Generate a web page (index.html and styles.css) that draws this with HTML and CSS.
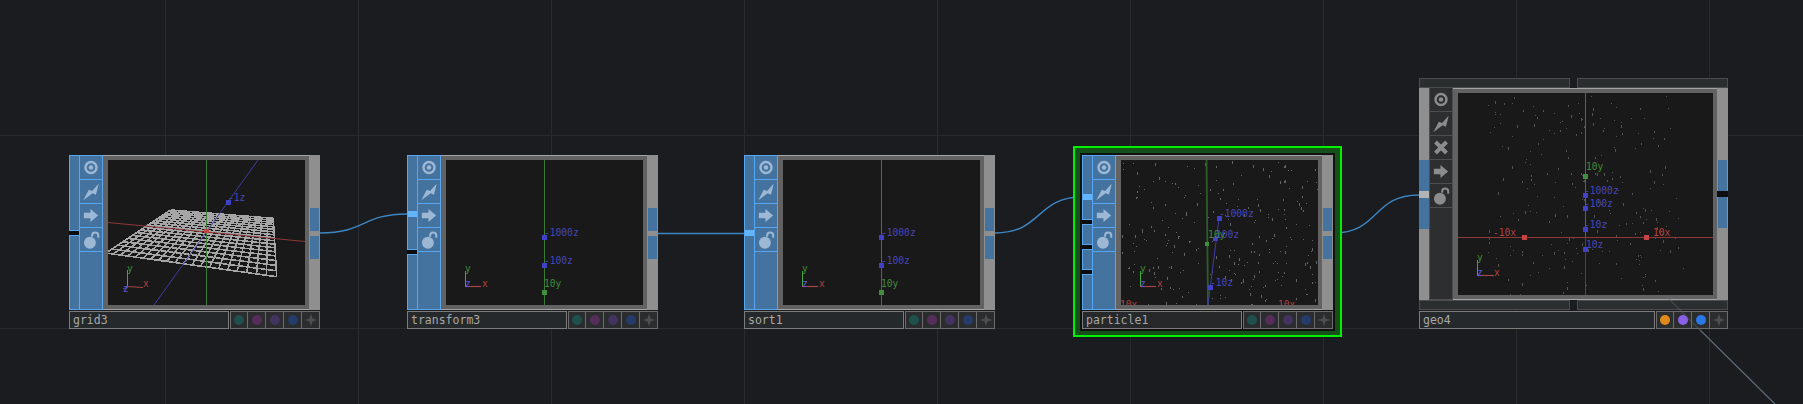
FILE: index.html
```html
<!DOCTYPE html>
<html lang="en">
<head>
<meta charset="utf-8">
<title>Network editor</title>
<link rel="stylesheet" href="styles.css">
</head>
<body>
<svg width="0" height="0" class="defs">
  <defs>
    <symbol id="i-view" viewBox="2 2 20 20"><circle cx="12" cy="12" r="5" fill="none" stroke="currentColor" stroke-width="2.2"/><circle cx="12" cy="12" r="2.1" fill="currentColor"/></symbol>
    <symbol id="i-bolt" viewBox="2 2 20 20"><path d="M19 5L16.5 15L13.5 13.5L5 20L10 10.5L13 11.5Z" fill="currentColor"/></symbol>
    <symbol id="i-x" viewBox="2 2 20 20"><path d="M7 7L17 17M17 7L7 17" fill="none" stroke="currentColor" stroke-width="3.6"/></symbol>
    <symbol id="i-arrow" viewBox="2 2 20 20"><path d="M5.5 9.5H11.5V6L18.5 12L11.5 18V14.5H5.5Z" fill="currentColor"/></symbol>
    <symbol id="i-lock" viewBox="2 2 20 20"><circle cx="11" cy="15" r="5.4" fill="currentColor"/><path d="M13 9.5V8.5C13 4.8 18.6 4.8 18.6 8.5V10.5" fill="none" stroke="currentColor" stroke-width="1.8"/></symbol>
    <symbol id="i-star" viewBox="0 0 18 18"><path d="M9 2.5L10.5 7.5L15.5 9L10.5 10.5L9 15.5L7.5 10.5L2.5 9L7.5 7.5Z" fill="currentColor"/></symbol>
  </defs>
</svg>

<main class="canvas">
  <svg class="wires" width="1803" height="404">
    <path d="M320 233C366 233 362 214 407 214"/>
    <path d="M658 233.5H744"/>
    <path d="M995 233C1042 233 1036 197 1082 197"/>
    <path d="M1333 233C1380 233 1372 195 1419 195"/>
  </svg>

  <div class="selection"></div>

  <section class="node node-grid">
    <div class="body">
      <div class="inputs">
        <div class="input in-76"></div>
        <div class="input in-fill"></div>
      </div>
      <div class="icons">
        <div class="icon"><svg><use href="#i-view"/></svg></div>
        <div class="icon"><svg><use href="#i-bolt"/></svg></div>
        <div class="icon"><svg><use href="#i-arrow"/></svg></div>
        <div class="icon"><svg><use href="#i-lock"/></svg></div>
      </div>
      <div class="viewer">
        <svg class="view" width="197" height="145">
          <g id="mesh"></g>
          <line class="g" x1="98.5" y1="0" x2="98.5" y2="145"/>
          <line class="r" x1="0" y1="62.5" x2="197" y2="81.5"/>
          <line class="b" x1="150" y1="0" x2="46" y2="145"/>
          <rect class="sq-r" x="96" y="69" width="5" height="4"/>
          <rect class="sq-b" x="118" y="40" width="5" height="5"/>
          <text class="t-b" x="120" y="41">-1z</text>
          <line class="ag" x1="19.5" y1="110" x2="19.5" y2="127"/>
          <line class="ar" x1="19" y1="126.5" x2="35" y2="127.5"/>
          <line class="ab" x1="19.5" y1="127" x2="15" y2="129"/>
          <text class="t-g" x="19" y="112">y</text>
          <text class="t-r" x="35" y="127">x</text>
          <text class="t-a" x="15" y="132">z</text>
        </svg>
      </div>
      <div class="outputs">
        <div class="output"></div>
        <div class="output"></div>
      </div>
    </div>
    <div class="label-row">
      <div class="name">grid3</div>
      <div class="btn"><span class="dot teal"></span></div>
      <div class="btn"><span class="dot magenta"></span></div>
      <div class="btn"><span class="dot purple"></span></div>
      <div class="btn"><span class="dot navy"></span></div>
      <div class="btn"><svg class="star"><use href="#i-star"/></svg></div>
    </div>
  </section>

  <section class="node node-transform">
    <div class="body">
      <div class="inputs">
        <div class="input in-95"><span class="hot hot-56"></span></div>
        <div class="input in-fill"></div>
      </div>
      <div class="icons">
        <div class="icon"><svg><use href="#i-view"/></svg></div>
        <div class="icon"><svg><use href="#i-bolt"/></svg></div>
        <div class="icon"><svg><use href="#i-arrow"/></svg></div>
        <div class="icon"><svg><use href="#i-lock"/></svg></div>
      </div>
      <div class="viewer">
        <svg class="view" width="197" height="145">
          <line class="g" x1="98.5" y1="0" x2="98.5" y2="145"/>
          <rect class="sq-b" x="96" y="75" width="5" height="5"/>
          <rect class="sq-b" x="96" y="103" width="5" height="5"/>
          <rect class="sq-g" x="96" y="130" width="5" height="5"/>
          <text class="t-b" x="98" y="76">-1000z</text>
          <text class="t-b" x="98" y="104">-100z</text>
          <text class="t-g" x="98" y="127">10y</text>
          <line class="ag" x1="19.5" y1="111" x2="19.5" y2="127"/>
          <line class="ar" x1="19" y1="126.5" x2="35" y2="126.5"/>
          <text class="t-g" x="19" y="112">y</text>
          <text class="t-r" x="36" y="127">x</text>
          <text class="t-a" x="19" y="127">z</text>
        </svg>
      </div>
      <div class="outputs">
        <div class="output"></div>
        <div class="output"></div>
      </div>
    </div>
    <div class="label-row">
      <div class="name">transform3</div>
      <div class="btn"><span class="dot teal"></span></div>
      <div class="btn"><span class="dot magenta"></span></div>
      <div class="btn"><span class="dot purple"></span></div>
      <div class="btn"><span class="dot navy"></span></div>
      <div class="btn"><svg class="star"><use href="#i-star"/></svg></div>
    </div>
  </section>

  <section class="node node-sort">
    <div class="body">
      <div class="inputs">
        <div class="input in-fill"><span class="hot hot-75"></span></div>
      </div>
      <div class="icons">
        <div class="icon"><svg><use href="#i-view"/></svg></div>
        <div class="icon"><svg><use href="#i-bolt"/></svg></div>
        <div class="icon"><svg><use href="#i-arrow"/></svg></div>
        <div class="icon"><svg><use href="#i-lock"/></svg></div>
      </div>
      <div class="viewer">
        <svg class="view" width="197" height="145">
          <line class="g" x1="98.5" y1="0" x2="98.5" y2="145"/>
          <rect class="sq-b" x="96" y="75" width="5" height="5"/>
          <rect class="sq-b" x="96" y="103" width="5" height="5"/>
          <rect class="sq-g" x="96" y="130" width="5" height="5"/>
          <text class="t-b" x="98" y="76">-1000z</text>
          <text class="t-b" x="98" y="104">-100z</text>
          <text class="t-g" x="98" y="127">10y</text>
          <line class="ag" x1="19.5" y1="111" x2="19.5" y2="127"/>
          <line class="ar" x1="19" y1="126.5" x2="35" y2="126.5"/>
          <text class="t-g" x="19" y="112">y</text>
          <text class="t-r" x="36" y="127">x</text>
          <text class="t-a" x="19" y="127">z</text>
        </svg>
      </div>
      <div class="outputs">
        <div class="output"></div>
        <div class="output"></div>
      </div>
    </div>
    <div class="label-row">
      <div class="name">sort1</div>
      <div class="btn"><span class="dot teal"></span></div>
      <div class="btn"><span class="dot magenta"></span></div>
      <div class="btn"><span class="dot purple"></span></div>
      <div class="btn"><span class="dot navy"></span></div>
      <div class="btn"><svg class="star"><use href="#i-star"/></svg></div>
    </div>
  </section>

  <section class="node node-particle">
    <div class="body">
      <div class="inputs">
        <div class="input in-65"><span class="hot hot-39"></span></div>
        <div class="input in-21"></div>
        <div class="input in-21"></div>
        <div class="input in-fill"></div>
      </div>
      <div class="icons">
        <div class="icon"><svg><use href="#i-view"/></svg></div>
        <div class="icon"><svg><use href="#i-bolt"/></svg></div>
        <div class="icon"><svg><use href="#i-arrow"/></svg></div>
        <div class="icon"><svg><use href="#i-lock"/></svg></div>
      </div>
      <div class="viewer">
        <svg class="view" width="197" height="145">
          <g id="dots-particle"></g>
          <line class="g thick" x1="85.5" y1="0" x2="87" y2="145"/>
          <line class="b" x1="98" y1="58" x2="87" y2="145"/>
          <rect class="sq-b" x="96" y="56" width="5" height="5"/>
          <rect class="sq-b" x="92" y="77" width="5" height="4"/>
          <rect class="sq-g" x="84" y="82" width="4" height="4"/>
          <rect class="sq-b" x="87" y="125" width="5" height="5"/>
          <text class="t-b" x="98" y="57">-1000z</text>
          <text class="t-b" x="95" y="78">100z</text>
          <text class="t-g" x="87" y="78">10y</text>
          <text class="t-b" x="89" y="126">-10z</text>
          <text class="t-r" x="-1" y="148">10x</text>
          <text class="t-r" x="157" y="148">10x</text>
          <line class="ag" x1="19.5" y1="111" x2="19.5" y2="127"/>
          <line class="ar" x1="19" y1="126.5" x2="35" y2="126.5"/>
          <text class="t-g" x="19" y="112">y</text>
          <text class="t-r" x="36" y="127">x</text>
          <text class="t-a" x="19" y="127">z</text>
        </svg>
      </div>
      <div class="outputs">
        <div class="output"></div>
        <div class="output"></div>
      </div>
    </div>
    <div class="label-row">
      <div class="name">particle1</div>
      <div class="btn"><span class="dot teal"></span></div>
      <div class="btn"><span class="dot magenta"></span></div>
      <div class="btn"><span class="dot purple"></span></div>
      <div class="btn"><span class="dot navy"></span></div>
      <div class="btn"><svg class="star"><use href="#i-star"/></svg></div>
    </div>
  </section>

  <section class="node node-geo">
    <div class="tabs">
      <div class="tab"></div>
      <div class="tab"></div>
    </div>
    <div class="body body-geo">
      <div class="rail rail-left">
        <div class="rail-port"></div>
        <div class="rail-gap"></div>
        <div class="rail-port"></div>
      </div>
      <div class="icons icons-off">
        <div class="icon"><svg><use href="#i-view"/></svg></div>
        <div class="icon"><svg><use href="#i-bolt"/></svg></div>
        <div class="icon"><svg><use href="#i-x"/></svg></div>
        <div class="icon"><svg><use href="#i-arrow"/></svg></div>
        <div class="icon"><svg><use href="#i-lock"/></svg></div>
      </div>
      <div class="viewer">
        <svg class="view" width="255" height="202">
          <g id="dots-geo"></g>
          <line class="g" x1="127.5" y1="0" x2="127.5" y2="144"/>
          <line class="b" x1="127.5" y1="144" x2="127.5" y2="202"/>
          <line class="r" x1="0" y1="144.5" x2="255" y2="144.5"/>
          <rect class="sq-g" x="125" y="81" width="5" height="5"/>
          <rect class="sq-b" x="125" y="100" width="5" height="5"/>
          <rect class="sq-b" x="125" y="113" width="5" height="5"/>
          <rect class="sq-b" x="125" y="134" width="5" height="5"/>
          <rect class="sq-b" x="125" y="154" width="5" height="5"/>
          <rect class="sq-r" x="64" y="142" width="5" height="5"/>
          <rect class="sq-r" x="186" y="142" width="5" height="5"/>
          <text class="t-g" x="128" y="77">10y</text>
          <text class="t-b" x="126" y="101">-1000z</text>
          <text class="t-b" x="126" y="114">-100z</text>
          <text class="t-b" x="126" y="135">-10z</text>
          <text class="t-b" x="128" y="155">10z</text>
          <text class="t-r" x="35" y="143">-10x</text>
          <text class="t-r" x="195" y="143">10x</text>
          <line class="ag" x1="19.5" y1="167" x2="19.5" y2="183"/>
          <line class="ar" x1="19" y1="182.5" x2="36" y2="182.5"/>
          <text class="t-g" x="19" y="168">y</text>
          <text class="t-r" x="36" y="183">x</text>
          <text class="t-a" x="19" y="183">z</text>
        </svg>
      </div>
      <div class="rail rail-right">
        <div class="rail-port"></div>
        <div class="rail-gap rail-gap-dark"></div>
        <div class="rail-port"></div>
      </div>
    </div>
    <div class="tabs">
      <div class="tab"></div>
      <div class="tab"></div>
    </div>
    <div class="label-row">
      <div class="name">geo4</div>
      <div class="btn"><span class="dot orange"></span></div>
      <div class="btn"><span class="dot violet"></span></div>
      <div class="btn"><span class="dot azure"></span></div>
      <div class="btn"><svg class="star"><use href="#i-star"/></svg></div>
    </div>
  </section>

  <svg class="wires-top" width="1803" height="404">
    <line class="faint" x1="1665" y1="295" x2="1700" y2="330"/>
    <line class="strong" x1="1700" y1="330" x2="1775" y2="404"/>
  </svg>
</main>
<script src="script.js"></script>
</body>
</html>
```

FILE: styles.css
```css
* { box-sizing: border-box; }

html, body {
  margin: 0;
  height: 100%;
  overflow: hidden;
}

body {
  background-color: #1a1c20;
  background-image:
    linear-gradient(to right, #272a2f 1px, transparent 1px),
    linear-gradient(to bottom, #272a2f 1px, transparent 1px);
  background-size: 193px 193px;
  background-position: 165px 135px;
}

.defs { position: absolute; }

.canvas {
  position: relative;
  width: 1803px;
  height: 404px;
  overflow: hidden;
}

.wires, .wires-top {
  position: absolute;
  left: 0;
  top: 0;
}

.wires-top { pointer-events: none; }

.wires path {
  fill: none;
  stroke: #3d86c4;
  stroke-width: 1.4;
}

.wires-top line { stroke: #5a6874; stroke-width: 1.3; }
.wires-top .faint { opacity: .45; }

.selection {
  position: absolute;
  left: 1073px;
  top: 146px;
  width: 269px;
  height: 191px;
  border: 2px solid #00f000;
  background: #15501a;
}

.selection::after {
  content: "";
  position: absolute;
  left: 5px;
  right: 5px;
  top: 5px;
  bottom: 4px;
  background: #101210;
}

.node {
  position: absolute;
  top: 155px;
  width: 251px;
}

.node-grid { left: 69px; }
.node-transform { left: 407px; }
.node-sort { left: 744px; }
.node-particle { left: 1082px; }
.node-geo { left: 1419px; top: 78px; width: 309px; }

.body {
  display: flex;
  height: 155px;
}

.body-geo { height: 212px; }

.inputs {
  width: 10px;
  display: flex;
  flex-direction: column;
  gap: 4px;
  background: #0c0c0c;
}

.input {
  position: relative;
  background: #44739f;
  border: 1px solid #57a6f2;
  border-right: 0;
}

.in-21 { height: 21px; }
.in-65 { height: 65px; }
.in-76 { height: 76px; }
.in-95 { height: 95px; }
.in-fill { flex: 1; }

.hot {
  position: absolute;
  left: 0;
  width: 9px;
  height: 6px;
  background: #62b4ff;
}

.hot-39 { top: 38px; }
.hot-56 { top: 55px; }
.hot-75 { top: 74px; }

.icons {
  width: 24px;
  background: #44739f;
  border: 1px solid #57a6f2;
  color: #9db8d4;
}

.icon {
  height: 24px;
  border-bottom: 1px solid #57a6f2;
}

.icon svg {
  display: block;
  width: 22px;
  height: 23px;
}

.icons-off {
  background: #2c2e2f;
  border-color: #4c4e4f;
  border-top: 0;
  color: #8c8c8c;
}

.icons-off .icon { border-bottom-color: #4c4e4f; }

.viewer {
  flex: 1;
  background: #626262;
  border-top: 1px solid #a4a4a4;
  border-bottom: 1px solid #a4a4a4;
  padding: 4px 4px 4px 5px;
}

.view {
  display: block;
  background: #191919;
  overflow: hidden;
}

.view line { stroke-width: 1; }
.view .g { stroke: #3a7a34; }
.view .g.thick { stroke: #2c5e2a; stroke-width: 1.8; }
.view .r { stroke: #8f3838; }
.view .b { stroke: #3c3ca8; }
.view .ag { stroke: #44a844; }
.view .ar { stroke: #a84444; stroke-width: 1.2; }
.view .ab { stroke: #4a4ac8; }

.sq-b { fill: #4040c8; }
.sq-g { fill: #3f8f3f; }
.sq-r { fill: #c24444; }

.view text {
  font-family: "DejaVu Sans Mono", monospace;
  font-size: 9.6px;
}

.t-b { fill: #4646b8; }
.t-g { fill: #418a3c; }
.t-r { fill: #b04242; }
.t-a { fill: #5a5ae0; }

.mesh-line {
  fill: none;
  stroke: #a6a6a6;
  stroke-width: 1.6;
  shape-rendering: crispEdges;
}

.outputs {
  width: 11px;
  background: #8f8f8f;
  padding: 53px 1px 0;
  display: flex;
  flex-direction: column;
  gap: 5px;
}

.output {
  height: 23px;
  background: #44739f;
}

.rail {
  width: 10px;
  background: #8f8f8f;
  padding-top: 72px;
  display: flex;
  flex-direction: column;
}

.rail-right { width: 11px; padding-right: 1px; padding-left: 1px; }

.rail-port {
  height: 31px;
  background: #44739f;
}

.rail-gap {
  height: 7px;
  background: #b4b4b4;
}

.rail-gap-dark {
  height: 6px;
  margin: 0 -1px;
  background: #0e0e0e;
}

.tabs {
  display: flex;
  gap: 7px;
  height: 10px;
}

.tab {
  flex: 1;
  background: #2b2e2e;
  border: 1px solid #4a4c4d;
}

.label-row {
  display: flex;
  height: 18px;
  margin-top: 1px;
}

.name {
  flex: 1;
  margin-right: 1px;
  padding-left: 3px;
  background: rgba(40, 42, 44, .93);
  border: 1px solid #7c7c7c;
  color: #a8a8a8;
  font-family: "DejaVu Sans Mono", monospace;
  font-size: 11.5px;
  line-height: 16px;
}

.btn {
  width: 18px;
  display: flex;
  align-items: center;
  justify-content: center;
  background: #2a2c2e;
  border: 1px solid #6c6c6c;
  border-left-width: 0;
}

.name + .btn { border-left-width: 1px; }

.dot {
  width: 10px;
  height: 10px;
  border-radius: 50%;
}

.teal { background: #1e514e; }
.magenta { background: #552d58; }
.purple { background: #433360; }
.navy { background: #243c69; }
.orange { background: #e08a1c; }
.violet { background: #8a5fe8; }
.azure { background: #2b78e8; }

.star {
  width: 18px;
  height: 18px;
  flex: none;
  color: #4e4e4e;
}
```

FILE: script.js
```js
(function () {
  var NS = "http://www.w3.org/2000/svg";

  function el(name, attrs, parent) {
    var n = document.createElementNS(NS, name);
    Object.keys(attrs).forEach(function (k) { n.setAttribute(k, attrs[k]); });
    parent.appendChild(n);
    return n;
  }

  // Perspective wireframe plane for grid3: homography from the unit square.
  function homography(p) {
    var dx1 = p[1][0] - p[2][0], dx2 = p[3][0] - p[2][0];
    var dy1 = p[1][1] - p[2][1], dy2 = p[3][1] - p[2][1];
    var sx = p[0][0] - p[1][0] + p[2][0] - p[3][0];
    var sy = p[0][1] - p[1][1] + p[2][1] - p[3][1];
    var det = dx1 * dy2 - dx2 * dy1;
    var g = (sx * dy2 - dx2 * sy) / det;
    var h = (dx1 * sy - sx * dy1) / det;
    var a = p[1][0] - p[0][0] + g * p[1][0];
    var b = p[3][0] - p[0][0] + h * p[3][0];
    var d = p[1][1] - p[0][1] + g * p[1][1];
    var e = p[3][1] - p[0][1] + h * p[3][1];
    return function (u, v) {
      var w = g * u + h * v + 1;
      return [(a * u + b * v + p[0][0]) / w, (d * u + e * v + p[0][1]) / w];
    };
  }

  var mesh = document.getElementById("mesh");
  var map = homography([[62.7, 50], [165.3, 58.3], [168.7, 116.7], [-2, 93]]);
  var cols = 20, rows = 17, d = "", i, a, b;
  for (i = 0; i <= cols; i++) {
    a = map(i / cols, 0); b = map(i / cols, 1);
    d += "M" + a[0].toFixed(1) + " " + a[1].toFixed(1) + "L" + b[0].toFixed(1) + " " + b[1].toFixed(1);
  }
  for (i = 0; i <= rows; i++) {
    a = map(0, i / rows); b = map(1, i / rows);
    d += "M" + a[0].toFixed(1) + " " + a[1].toFixed(1) + "L" + b[0].toFixed(1) + " " + b[1].toFixed(1);
  }
  el("path", { d: d, "class": "mesh-line" }, mesh);

  // Particles: seeded so that every render draws the same cloud.
  function rng(seed) {
    return function () {
      seed = (seed + 0x6d2b79f5) | 0;
      var t = Math.imul(seed ^ (seed >>> 15), 1 | seed);
      t = (t + Math.imul(t ^ (t >>> 7), 61 | t)) ^ t;
      return ((t ^ (t >>> 14)) >>> 0) / 4294967296;
    };
  }

  function scatter(id, seed, count, w, h, color, insetX) {
    var g = document.getElementById(id), r = rng(seed), n;
    for (n = 0; n < count; n++) {
      var x = insetX + r() * (w - insetX * 2);
      var y = r() * h;
      var tall = r() < 0.45;
      el("rect", {
        x: Math.round(x), y: Math.round(y),
        width: 1, height: tall ? 2 + Math.floor(r() * 2) : 1,
        fill: color
      }, g);
    }
  }

  scatter("dots-particle", 7, 240, 197, 145, "#646464", 0);
  scatter("dots-geo", 21, 230, 255, 202, "#525252", 30);
}());
```
